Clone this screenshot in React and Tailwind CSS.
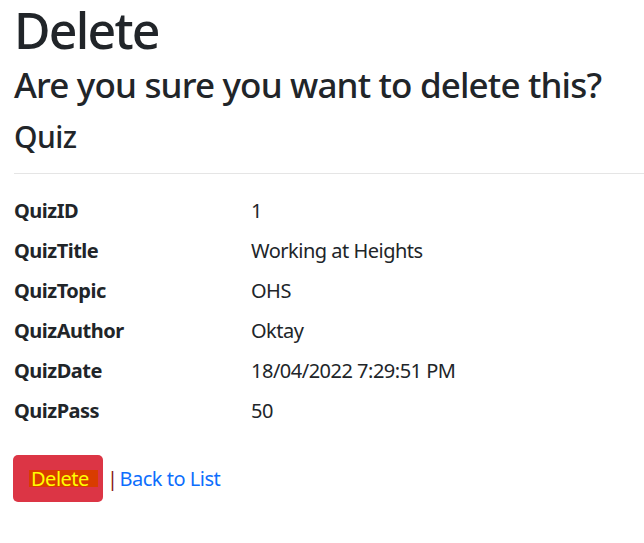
export default function App() {
  const rows = [
    ["QuizID", "1"],
    ["QuizTitle", "Working at Heights"],
    ["QuizTopic", "OHS"],
    ["QuizAuthor", "Oktay"],
    ["QuizDate", "18/04/2022 7:29:51 PM"],
    ["QuizPass", "50"],
  ];
  return (
    <div className="min-h-[543px] bg-white px-[14px] text-[#212529]" style={{ fontFamily: '"Noto Sans", "Open Sans", sans-serif' }}>
      <h1 className="m-0 text-[50px] font-medium leading-[60px] tracking-[-0.035em]">Delete</h1>
      <h3 className="mt-[4px] text-[35px] font-medium leading-[42px] tracking-[-0.024em] whitespace-nowrap">Are you sure you want to delete this?</h3>
      <div>
        <h4 className="mt-[12px] text-[30px] font-medium leading-[38px] tracking-[-0.02em]">Quiz</h4>
        <hr className="mt-[17px] mb-[22px] border-t border-[#e5e5e5] mr-[-14px]" />
        <dl className="text-[20px] leading-[30px] tracking-[-0.025em]">
          {rows.map(([k, v]) => (
            <div key={k} className="flex mb-[10px]">
              <dt className="w-[237px] font-bold">{k}</dt>
              <dd>{v}</dd>
            </div>
          ))}
        </dl>
        <div className="mt-[29px] flex items-center text-[20px] tracking-[-0.025em]">
          <button className="h-[47px] w-[90px] rounded-[5px] bg-[#dc3545] flex items-center justify-start pl-[16px] -ml-[1px]">
            <span className="bg-[#d93c00] text-[#ffff00] leading-[17px] pl-[2px] pr-[9px]">Delete</span>
          </button>
          <span className="ml-[4px] text-[#8b1a1a]">|</span>
          <a className="ml-[2px] text-[#0d6efd]" href="#">Back to List</a>
        </div>
      </div>
    </div>
  );
}
